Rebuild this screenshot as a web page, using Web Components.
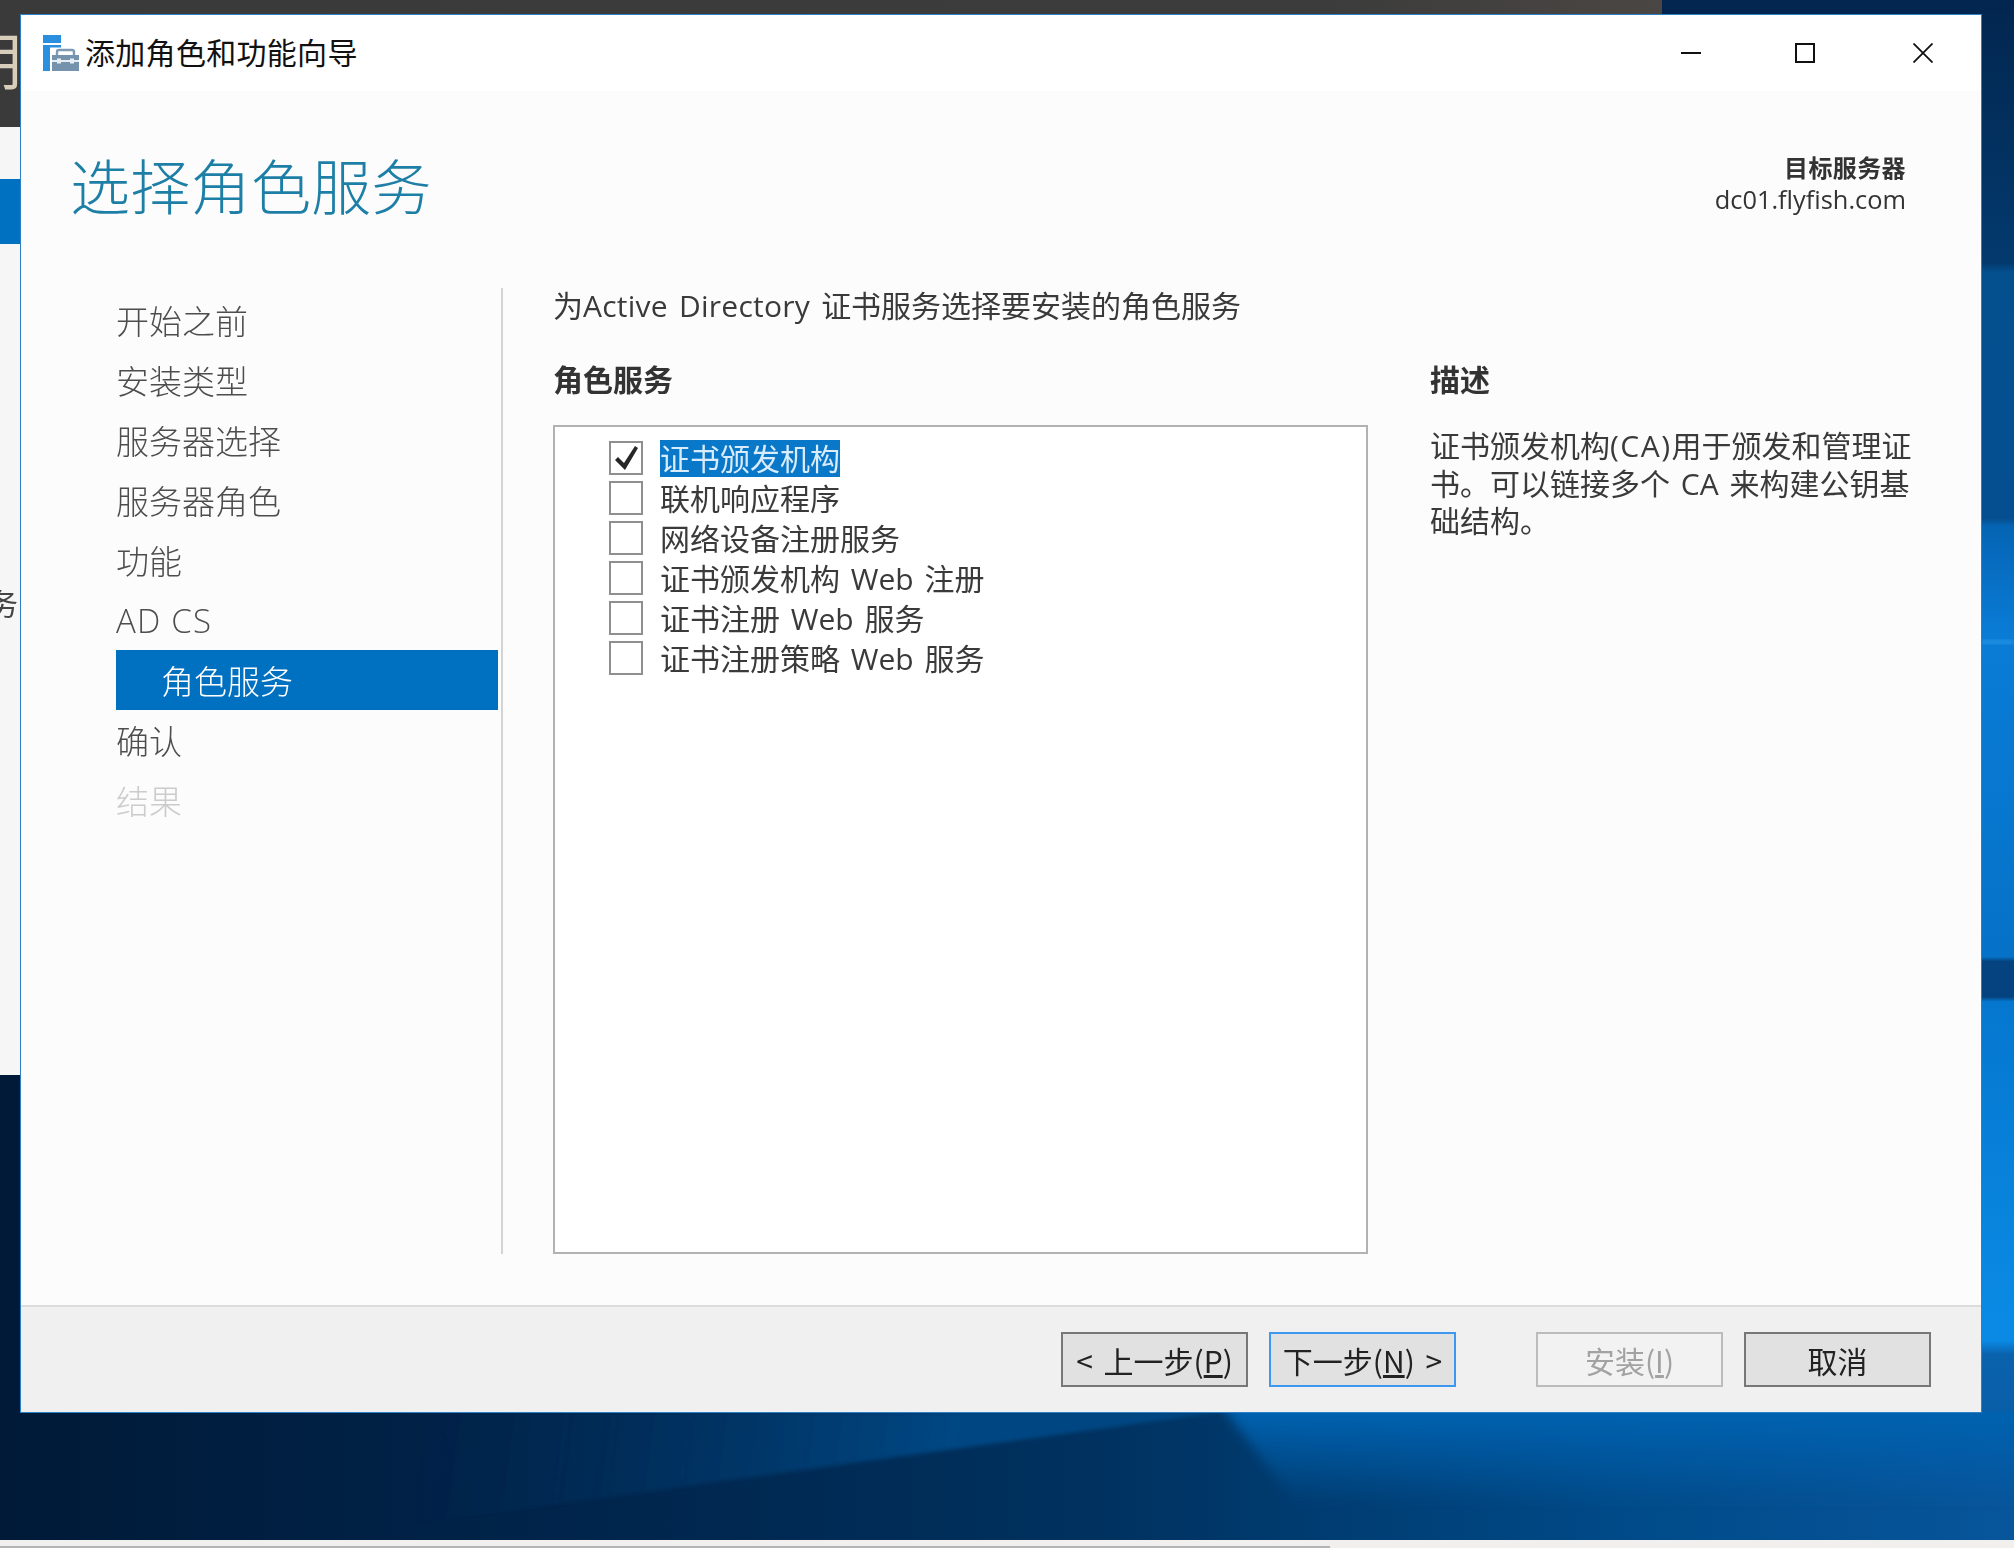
<!DOCTYPE html>
<html lang="zh-CN"><head><meta charset="utf-8"><title>添加角色和功能向导</title>
<style>
html,body{margin:0;padding:0;width:2014px;height:1548px;overflow:hidden;background:#001a38}
body{font-family:"Open Sans","Noto Sans CJK SC",sans-serif}
</style></head><body>
<desk-top>
  <wizard-window>
    <wizard-titlebar slot="titlebar">添加角色和功能向导</wizard-titlebar>
    <wizard-header slot="header" heading="选择角色服务" label="目标服务器" server="dc01.flyfish.com"></wizard-header>
    <wizard-nav slot="nav">
      <nav-item>开始之前</nav-item>
      <nav-item>安装类型</nav-item>
      <nav-item>服务器选择</nav-item>
      <nav-item>服务器角色</nav-item>
      <nav-item>功能</nav-item>
      <nav-item style="letter-spacing:1.2px">AD CS</nav-item>
      <nav-item selected>角色服务</nav-item>
      <nav-item>确认</nav-item>
      <nav-item disabled>结果</nav-item>
    </wizard-nav>
    <role-panel slot="content" label="角色服务">
      <span slot="intro">为<span style="letter-spacing:.25px;word-spacing:3px">Active Directory </span>证书服务选择要安装的角色服务</span>
      <role-item checked selected>证书颁发机构</role-item>
      <role-item>联机响应程序</role-item>
      <role-item>网络设备注册服务</role-item>
      <role-item>证书颁发机构 Web 注册</role-item>
      <role-item>证书注册 Web 服务</role-item>
      <role-item>证书注册策略 Web 服务</role-item>
    </role-panel>
    <desc-panel slot="desc" label="描述">证书颁发机构<span style="letter-spacing:1.5px">(CA)</span>用于颁发和管理证<br>书。可以链接多个 CA 来构建公钥基<br>础结构。</desc-panel>
    <wizard-button slot="footer">&lt; 上一步(<u>P</u>)</wizard-button>
    <wizard-button slot="footer" focused>下一步(<u>N</u>) &gt;</wizard-button>
    <wizard-button slot="footer" disabled spaced>安装(<u>I</u>)</wizard-button>
    <wizard-button slot="footer">取消</wizard-button>
  </wizard-window>
</desk-top>
<script>
const CJK='"Open Sans","Noto Sans CJK SC",sans-serif';
function def(name,html,init){
  customElements.define(name,class extends HTMLElement{
    constructor(){super();this.attachShadow({mode:'open'}).innerHTML=typeof html==='function'?html(this):html;}
    connectedCallback(){if(init)init(this);}
  });
}
def('desk-top',`<style>
:host{display:block;position:relative;width:2014px;height:1548px;overflow:hidden;font-family:${CJK}}
svg{position:absolute;left:0;top:0}
.frag{position:absolute;white-space:nowrap;overflow:hidden;font-family:"Noto Sans CJK SC",sans-serif;filter:blur(.6px)}
.a{left:0;top:16px;width:23px;height:84px;color:#d8cdbb;font-size:62px;line-height:84px;direction:rtl}
.b{left:0;top:582px;width:18px;height:40px;color:#444;font-size:30px;line-height:40px;direction:rtl}
</style>
<svg width="2014" height="1548" aria-hidden="true">
<defs>
<linearGradient id="bot" x1="0" x2="1" y1="0" y2="0"><stop offset="0" stop-color="#001a38"/><stop offset=".3" stop-color="#00254c"/><stop offset=".55" stop-color="#003260"/><stop offset=".8" stop-color="#004a88"/><stop offset="1" stop-color="#07559b"/></linearGradient>
<linearGradient id="right" gradientUnits="userSpaceOnUse" x1="0" x2="0" y1="0" y2="1548">
<stop offset="0" stop-color="#02264f"/><stop offset=".17" stop-color="#033a6e"/><stop offset=".176" stop-color="#04508f"/><stop offset=".335" stop-color="#054f90"/><stop offset=".34" stop-color="#0564b4"/><stop offset=".41" stop-color="#0a7cd6"/><stop offset=".618" stop-color="#0572c8"/><stop offset=".621" stop-color="#04437f"/><stop offset=".644" stop-color="#04437f"/><stop offset=".647" stop-color="#0577cf"/><stop offset=".85" stop-color="#0a8ae4"/><stop offset=".866" stop-color="#0a8ae4"/><stop offset=".875" stop-color="#0a62ad"/><stop offset="1" stop-color="#07559b"/></linearGradient>
<linearGradient id="wedge" gradientUnits="userSpaceOnUse" x1="950" y1="1470" x2="420" y2="1400"><stop offset="0" stop-color="#004a88" stop-opacity=".9"/><stop offset="1" stop-color="#00305e" stop-opacity="0"/></linearGradient>
<linearGradient id="band" gradientUnits="userSpaceOnUse" x1="1700" y1="1412" x2="1700" y2="1505"><stop offset="0" stop-color="#0062b0"/><stop offset="1" stop-color="#0062b0" stop-opacity="0"/></linearGradient>
<linearGradient id="top" x1="0" x2="1" y1="0" y2="0"><stop offset="0" stop-color="#3a3a3a"/><stop offset=".8" stop-color="#3c3c3c"/><stop offset="1" stop-color="#4a4643"/></linearGradient>
<filter id="soft"><feGaussianBlur stdDeviation="2"/></filter>
<filter id="softer" x="-5%" y="-20%" width="110%" height="140%"><feGaussianBlur stdDeviation="6"/></filter>
</defs>
<rect width="2014" height="1548" fill="url(#bot)"/>
<polygon points="300,1540 1220,1412 20,1412 20,1540" fill="url(#wedge)" filter="url(#soft)"/>
<polygon points="1218,1400 2030,1400 2030,1510 1300,1510" fill="url(#band)" filter="url(#softer)"/>
<rect x="1981" y="0" width="33" height="1412" fill="url(#right)"/>
<rect x="1981" y="640" width="33" height="4" fill="#3aa6ec" opacity=".55" filter="url(#soft)"/>
<rect x="1662" width="352" height="14" fill="#02264f"/>
<rect width="1662" height="14" fill="url(#top)"/>
<rect y="14" width="20" height="113" fill="#3a3a3a"/>
<rect y="127" width="20" height="948" fill="#f6f6f6"/>
<rect y="179" width="20" height="65" fill="#0070c0"/>
<rect y="1075" width="20" height="465" fill="#001a38"/>
<rect y="1540" width="2014" height="8" fill="#f2f0ee"/>
<rect y="1546" width="1330" height="2" fill="#b4b4b4"/>
</svg>
<div class="frag a">朋</div><div class="frag b">务</div>
<slot></slot>`);

def('wizard-window',`<style>
:host{display:flex;flex-direction:column;position:absolute;left:20px;top:14px;width:1960px;height:1397px;border:1px solid #2b80c8;background:#fcfcfc;color:#333}
.main{display:flex;height:966px}
.nav{width:382px;margin-left:95px;flex:none}
.rule{width:2px;margin:0 50px 0 3px;background:#d4d4d4;flex:none}
.content{width:815px;flex:none}
.desc{margin-left:62px;flex:1}
.footer{margin-top:51px;flex:1;background:#f0f0f0;border-top:2px solid #dcdcdc;display:flex;justify-content:flex-end;gap:21px;padding:25px 50px 0 0;align-items:flex-start}
</style>
<slot name="titlebar"></slot><slot name="header"></slot>
<div class="main"><div class="nav"><slot name="nav"></slot></div><div class="rule"></div><div class="content"><slot name="content"></slot></div><div class="desc"><slot name="desc"></slot></div></div>
<div class="footer"><slot name="footer"></slot></div>`);

def('wizard-titlebar',`<style>
:host{display:flex;align-items:center;height:76px;background:#fff;color:#111;font-size:30px;flex:none;font-family:"Noto Sans CJK SC",sans-serif}
svg.ic{margin-left:22px;margin-right:6px;flex:none}
.t{flex:1;position:relative;top:-2px;letter-spacing:.3px}
.c{display:flex}
.b{width:116px;height:76px;display:flex;align-items:center;justify-content:center}
</style>
<svg class="ic" width="36" height="36" viewBox="0 0 36 36" aria-hidden="true">
<rect x="0" y="0" width="18" height="8" fill="#2b8fe0"/><rect x="0" y="10" width="7" height="26" fill="#2b8fe0"/><rect x="7" y="10" width="11" height="2.5" fill="#2b8fe0"/>
<path d="M14 20V17q0-2 2-2h13q2 0 2 2v3" fill="none" stroke="#7f9ab3" stroke-width="2.4"/>
<rect x="9" y="20" width="27" height="16" fill="#7693ae"/><rect x="9" y="25" width="27" height="2" fill="#e6edf3"/><rect x="14" y="23.5" width="4" height="5" fill="#e6edf3"/><rect x="27" y="23.5" width="4" height="5" fill="#e6edf3"/>
</svg>
<span class="t"><slot></slot></span>
<div class="c">
<div class="b" style="margin-right:-2px"><svg width="20" height="20" viewBox="0 0 20 20"><path d="M0 9h20v2H0z" fill="#111"/></svg></div>
<div class="b" style="margin-right:2px"><svg width="20" height="20" viewBox="0 0 20 20"><rect x="1" y="1" width="18" height="18" fill="none" stroke="#111" stroke-width="2"/></svg></div>
<div class="b"><svg width="20" height="20" viewBox="0 0 20 20"><path d="M.5.5l19 19M19.5.5l-19 19" fill="none" stroke="#111" stroke-width="1.8"/></svg></div>
</div>`);

def('wizard-header',h=>`<style>
:host{display:flex;height:197px;flex:none;box-sizing:border-box;justify-content:space-between;padding:0 75px 0 49px}
h1{margin:51px 0 0;height:84px;font:300 60px/84px "Noto Sans CJK SC",sans-serif;color:#1e7fa6;letter-spacing:.3px;filter:blur(.7px)}
.r{text-align:right;margin-top:60px;color:#333;font-size:24px;line-height:32px;filter:blur(.6px)}
.l{font-family:"Noto Sans CJK SC",sans-serif;font-weight:700;letter-spacing:.4px}
.s{font-family:"Open Sans",sans-serif;font-size:25.4px}
</style>
<h1>${h.getAttribute('heading')}</h1><div class="r"><div class="l">${h.getAttribute('label')}</div><div class="s">${h.getAttribute('server')}</div></div>`);

def('wizard-nav',`<style>:host{display:block;padding-top:2px}</style><slot></slot>`);

def('nav-item',`<style>
:host{display:flex;align-items:center;height:60px;font-size:33px;color:#4d4d4d;font-family:"Open Sans","Noto Sans CJK SC",sans-serif;font-weight:300;white-space:nowrap}
:host([selected]){background:#0070c0;color:#fff;padding-left:45px}
:host([disabled]){color:#ccc}
span{filter:blur(.6px)}
</style><span><slot></slot></span>`);

def('role-panel',h=>`<style>
:host{display:block;height:966px}
.i{font-size:30px;line-height:38px;height:38px;color:#3a3a3a;white-space:nowrap;position:relative;top:-1px;filter:blur(.6px)}
.l{font-size:30px;line-height:38px;font-weight:700;color:#333;margin-top:33px;font-family:"Noto Sans CJK SC",sans-serif;filter:blur(.6px)}
.box{margin-top:28px;height:829px;box-sizing:border-box;border:2px solid #b2b2b2;background:#fff;padding:11px 0 0 54px}
</style><div class="i"><slot name="intro"></slot></div><div class="l">${h.getAttribute('label')}</div><div class="box"><slot></slot></div>`);

def('role-item',h=>`<style>
:host{display:flex;align-items:center;height:40px;font-size:30px;color:#3a3a3a;white-space:nowrap;word-spacing:3px}
.cb{width:34px;height:34px;box-sizing:border-box;border:2px solid #8f8f8f;background:#fff;margin-right:17px;flex:none;display:flex;align-items:center;justify-content:center}
.cb svg{display:${h.hasAttribute('checked')?'block':'none'}}
.t{line-height:37px;height:37px;display:block;filter:blur(.6px)}
:host([selected]) .t{background:#0a78c8;color:#d8ecfb}
</style><span class="cb"><svg width="26" height="26" viewBox="0 0 26 26" aria-hidden="true"><path d="M2 15l3-3 6 6L22 1l3 2-13 22z" fill="#262626"/></svg></span><span class="t"><slot></slot></span>`);

def('desc-panel',h=>`<style>
:host{display:block;word-spacing:3px}
.l{font-size:30px;line-height:38px;font-weight:700;color:#333;margin-top:71px;font-family:"Noto Sans CJK SC",sans-serif;filter:blur(.6px)}
.p{margin-top:30px;font-size:30px;line-height:37.5px;color:#3a3a3a;white-space:nowrap;filter:blur(.6px)}
</style><div class="l">${h.getAttribute('label')}</div><div class="p"><slot></slot></div>`);

def('wizard-button',`<style>
:host{display:flex;align-items:center;justify-content:center;box-sizing:border-box;width:187px;height:55px;background:#e1e1e1;border:2px solid #777;color:#222;font-size:30px;white-space:pre;font-family:"Noto Sans CJK SC",sans-serif;word-spacing:4px}
:host([focused]){border-color:#3f98f0}
:host([disabled]){background:#f2f2f2;border-color:#bcbcbc;color:#a2a2a2}
:host([spaced]){margin-left:59px}
span{filter:blur(.5px)}
</style><span><slot></slot></span>`);
</script>
</body></html>
